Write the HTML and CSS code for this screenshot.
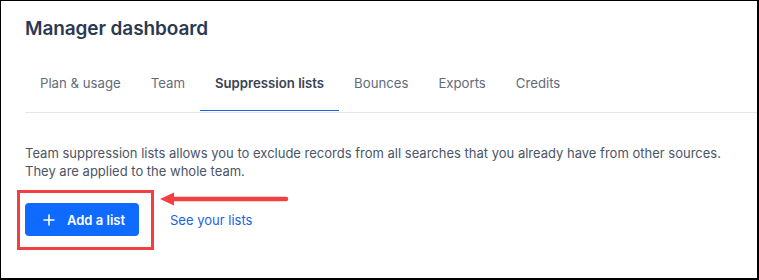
FILE: index.html
```html
<!DOCTYPE html>
<html lang="en">
<head>
  <meta charset="UTF-8">
  <meta name="viewport" content="width=device-width, initial-scale=1.0">
  <title>Manager dashboard</title>
  <link rel="stylesheet" href="styles.css">
</head>
<body>
  <div class="frame">
    <h1>Manager dashboard</h1>

    <nav class="tabs">
      <a class="tab" href="#">Plan &amp; usage</a>
      <a class="tab" href="#">Team</a>
      <a class="tab active" href="#">Suppression lists</a>
      <a class="tab" href="#">Bounces</a>
      <a class="tab" href="#">Exports</a>
      <a class="tab" href="#">Credits</a>
    </nav>

    <p class="intro">Team suppression lists allows you to exclude records from all searches that you already have from other sources.<br>They are applied to the whole team.</p>

    <div class="actions">
      <span class="highlight">
        <button class="btn-primary" type="button">
          <svg class="plus" width="12" height="12" viewBox="0 0 12 12" aria-hidden="true">
            <path d="M6 0.5v11M0.5 6h11" stroke="#fff" stroke-width="1.6" fill="none"/>
          </svg>
          Add a list
        </button>
      </span>
      <a class="link" href="#">See your lists</a>

      <!-- annotation arrow -->
      <svg class="arrow" width="132" height="20" viewBox="0 0 132 20" aria-hidden="true">
        <path d="M14 10H127" stroke="#f23f42" stroke-width="4.5" stroke-linecap="round"/>
        <path d="M1 10L15 3.5V16.5Z" fill="#f23f42"/>
      </svg>
    </div>
  </div>
</body>
</html>
```

FILE: styles.css
```css
:root {
  --title: #2b3a50;
  --text: #4a5568;
  --tab: #5f6b7b;
  --tab-active: #3a4453;
  --blue: #1a62e0;
  --btn: #0f6bff;
  --line: #e3e5e9;
  --annot: #f23f42;
}
html, body {
  margin: 0;
  background: #fff;
}
body {
  font-family: Inter, 'Noto Sans', sans-serif;
  color: var(--text);
}
.frame {
  height: 280px;
  box-sizing: border-box;
  border-style: solid;
  border-color: #000;
  border-width: 1px 2px 2px 1px;
  padding: 0 0 0 24px;
  overflow: hidden;
}
h1 {
  margin: 16px 0 0;
  font-size: 19px;
  line-height: 24px;
  font-weight: 600;
  color: var(--title);
  letter-spacing: -0.1px;
}
.tabs {
  display: flex;
  margin-top: 14px;
  padding-bottom: 1px;
  border-bottom: 1px solid var(--line);
}
.tab {
  padding: 18px 15px 17px;
  font-size: 13.2px;
  line-height: 20px;
  color: var(--tab);
  text-decoration: none;
  border-bottom: 1px solid transparent;
}
.tab.active {
  color: var(--tab-active);
  font-weight: 600;
  border-bottom-color: var(--blue);
}
.intro {
  margin: 31px 0 0;
  font-size: 13px;
  line-height: 18px;
}
.actions {
  display: flex;
  align-items: center;
  margin-top: 23px;
  position: relative;
}
.highlight {
  position: relative;
  display: inline-flex;
}
.highlight::after {
  content: "";
  position: absolute;
  left: -8px;
  top: -13px;
  right: -15px;
  bottom: -14px;
  border: 3px solid var(--annot);
}
.btn-primary {
  display: inline-flex;
  align-items: center;
  gap: 12px;
  height: 33px;
  width: 114px;
  padding: 0 0 0 18px;
  border: 0;
  border-radius: 4px;
  background: var(--btn);
  color: #fff;
  font-family: inherit;
  font-size: 13px;
  font-weight: 600;
}
.link {
  margin-left: 31px;
  font-size: 13px;
  color: var(--blue);
  text-decoration: none;
}
.arrow {
  position: absolute;
  left: 134px;
  top: -14px;
}
```
